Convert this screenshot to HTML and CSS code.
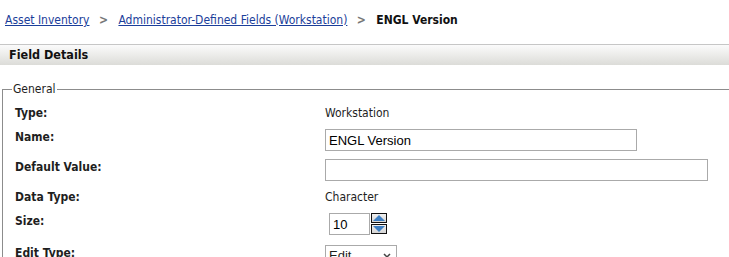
FILE: index.html
```html
<!DOCTYPE html>
<html lang="en">
<head>
    <meta charset="UTF-8">
    <title>ENGL Version - Field Details</title>
    <link rel="stylesheet" href="styles.css">
</head>
<body>
    <div class="breadcrumb">
        <a href="#">Asset Inventory</a>
        <span class="sep">&gt;</span>
        <a href="#">Administrator-Defined Fields (Workstation)</a>
        <span class="sep">&gt;</span>
        <span class="current">ENGL Version</span>
    </div>

    <div class="section-header">Field Details</div>

    <fieldset class="general">
        <legend>General</legend>
        <div class="form-grid">
            <div class="label">Type:</div>
            <div class="value">Workstation</div>

            <div class="label">Name:</div>
            <div class="value"><input type="text" class="text-input name-input" value="ENGL Version"></div>

            <div class="label">Default Value:</div>
            <div class="value"><input type="text" class="text-input default-input" value=""></div>

            <div class="label">Data Type:</div>
            <div class="value">Character</div>

            <div class="label">Size:</div>
            <div class="value size-cell">
                <input type="text" class="text-input size-input" value="10">
                <div class="spinner">
                    <button class="spin-btn">
                        <svg width="14" height="8" viewBox="0 0 14 8"><polygon points="7,1 13,7 1,7" fill="#3d7fc4"/></svg>
                    </button>
                    <button class="spin-btn">
                        <svg width="14" height="8" viewBox="0 0 14 8"><polygon points="1,1 13,1 7,7" fill="#3d7fc4"/></svg>
                    </button>
                </div>
            </div>

            <div class="label edit-label">Edit Type:</div>
            <div class="value edit-cell">
                <div class="select-box">
                    <span>Edit</span>
                    <svg width="8" height="6" viewBox="0 0 8 6"><path d="M1 1 L4 4 L7 1" stroke="#444" stroke-width="1.5" fill="none"/></svg>
                </div>
            </div>
        </div>
    </fieldset>
</body>
</html>
```

FILE: styles.css
```css
body {
    margin: 0;
    font-family: 'DejaVu Sans Condensed', 'DejaVu Sans', sans-serif;
    font-size: 12px;
    color: #1e1e1e;
    background: #fff;
    overflow: hidden;
}
.breadcrumb {
    height: 44px;
    box-sizing: border-box;
    padding: 12px 5px 0;
    line-height: 16px;
}
.breadcrumb a {
    color: #1b3e9a;
    text-decoration: underline;
}
.breadcrumb .sep {
    color: #777;
    font-weight: bold;
    margin: 0 7px 0 6px;
}
.breadcrumb .current {
    font-weight: bold;
    color: #111;
}
.section-header {
    border-top: 1px solid #c6c6c6;
    height: 20px;
    line-height: 20px;
    padding-left: 9px;
    font-weight: bold;
    font-size: 12.5px;
    color: #111;
    background: linear-gradient(#fbfbfb, #dcdcd8);
}
.general {
    margin: 16px -40px 0 2px;
    padding: 0 12px;
    border: 1px solid #8c8c8c;
    border-bottom: none;
}
.general legend {
    padding: 0 1px;
    margin-left: -3px;
    color: #1e1e1e;
    line-height: 16px;
}
.form-grid {
    display: grid;
    grid-template-columns: 310px 1fr;
    row-gap: 8px;
    padding-top: 8px;
    line-height: 16px;
}
.label {
    font-weight: bold;
}
.value {
    min-height: 16px;
}
.edit-label,
.edit-cell {
    margin-top: 2px;
}
.text-input {
    font-family: 'Liberation Sans', Arial, sans-serif;
    font-size: 13px;
    color: #000;
    height: 22px;
    box-sizing: border-box;
    border: 1px solid #aaa;
    padding: 0 3px;
    margin: 0;
    display: block;
}
.name-input {
    width: 312px;
}
.default-input {
    width: 383px;
}
.size-cell {
    display: flex;
    align-items: flex-start;
    padding-left: 4px;
}
.size-input {
    width: 41px;
}
.spinner {
    display: flex;
    flex-direction: column;
    gap: 1px;
    margin-left: 1px;
}
.spin-btn {
    width: 16px;
    height: 10px;
    padding: 0;
    border: 1px solid #111;
    background: linear-gradient(#f0f0f0, #d4d4d4);
    display: flex;
    align-items: center;
    justify-content: center;
}
.select-box {
    width: 72px;
    height: 22px;
    box-sizing: border-box;
    border: 1px solid #aaa;
    display: flex;
    align-items: center;
    justify-content: space-between;
    padding: 0 5px 0 3px;
    font-family: 'Liberation Sans', Arial, sans-serif;
    font-size: 13px;
}
```
